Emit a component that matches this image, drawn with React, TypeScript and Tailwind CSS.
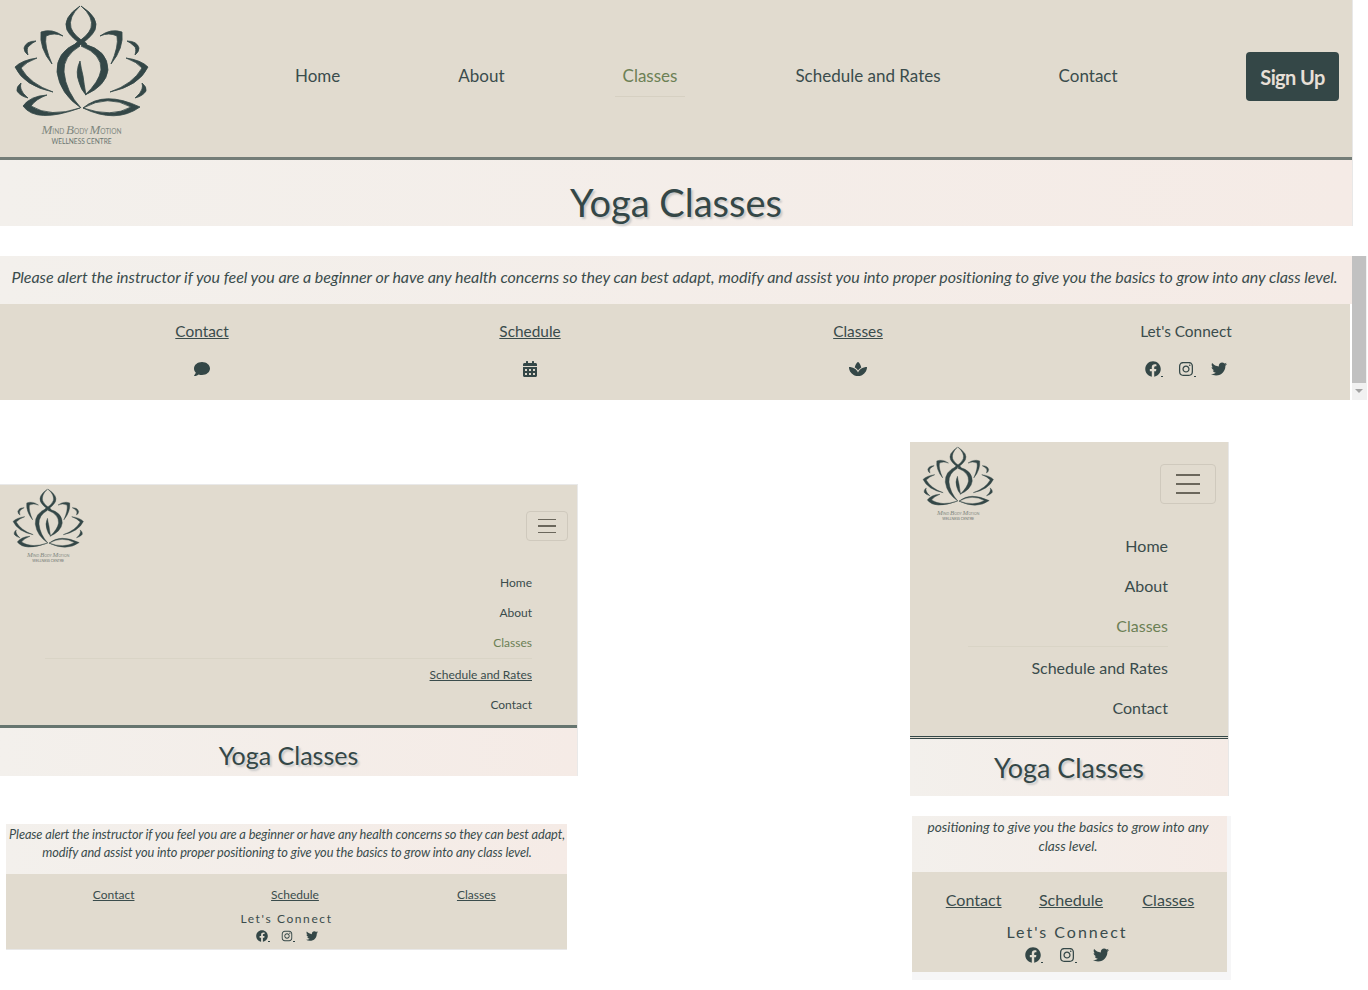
import React from "react";
import { FaComment, FaCalendarAlt, FaSpa, FaFacebook, FaInstagram, FaTwitter } from "react-icons/fa";

const font = "font-['Lato','Noto_Sans',sans-serif]";

function Petals() {
  return (
    <g fill="#344747" stroke="#344747" strokeWidth="0.8" strokeLinejoin="round">
      {/* crown petal */}
      <path d="M63 36 Q52 28 41 32 Q39 48 52 64 Q44 46 46 36 Q54 32 63 36Z" />
      {/* small upper petal */}
      <path d="M36 41 Q26 41 24 48 Q24 52 28 55 Q26 48 29 46 Q32 43 36 41Z" />
      {/* large side petal */}
      <path d="M37 58 Q22 60 15 67 Q24 86 53 92 Q30 84 21 68 Q26 62 37 58Z" />
      {/* small lower petal */}
      <path d="M21 83 Q16 87 17 91 Q20 96 28 98 Q22 93 21 89 Q20 86 21 83Z" />
    </g>
  );
}

function Logo({ className }: { className: string }) {
  return (
    <svg viewBox="0 0 164 155" className={className}>
      <g fill="#344747" stroke="#344747" strokeWidth="0.8" strokeLinejoin="round">
        {/* head */}
        <path d="M80 6 Q62 18 67 30 Q71 38 85 47 Q88 44 86 43 Q74 36 71 28 Q68 17 80 6Z" />
        <path d="M81 6 Q100 18 95 30 Q91 38 77 47 Q74 44 76 43 Q88 36 91 28 Q94 17 81 6Z" />
        {/* body */}
        <path d="M77 43 Q56 52 57 72 Q60 94 81 108 Q66 92 64 72 Q63 56 80 46Z" />
        <path d="M84 44 Q108 50 108 70 Q106 86 85 95 Q99 82 101 70 Q102 54 81 46Z" />
        <path d="M80 61 Q75 72 79 82 Q81 90 86 95 Q84 84 83 76 Q81 68 80 61Z" />
        {/* seat leaves */}
        <path d="M47 95 Q30 96 23 106 Q36 124 80 108 Q50 118 31 106 Q36 99 47 95Z" />
        <path d="M83 108 Q104 90 140 107 Q116 124 83 108 Q112 118 131 107 Q108 94 83 108Z" />
      </g>
      <Petals />
      <g transform="matrix(-1 0 0 1 163 0)">
        <Petals />
      </g>
      <text x="81.5" y="134" textAnchor="middle" fill="#80877f" fontSize="6.6" fontFamily="Lato, sans-serif">
        <tspan fontFamily="Liberation Serif, serif" fontStyle="italic" fontSize="13">M</tspan>IND{" "}
        <tspan fontFamily="Liberation Serif, serif" fontStyle="italic" fontSize="13">B</tspan>ODY{" "}
        <tspan fontFamily="Liberation Serif, serif" fontStyle="italic" fontSize="13">M</tspan>OTION
      </text>
      <text x="81.5" y="144" textAnchor="middle" fill="#6a7570" fontSize="6.6" fontFamily="Lato, sans-serif">
        WELLNESS CENTRE
      </text>
    </svg>
  );
}

function Burger({ box, line, gap }: { box: string; line: string; gap: string }) {
  return (
    <button className={`flex flex-col items-center justify-center rounded border border-[#cfc9bd] ${box} ${gap}`}>
      <span className={`block bg-[#6b675c] ${line}`} />
      <span className={`block bg-[#6b675c] ${line}`} />
      <span className={`block bg-[#6b675c] ${line}`} />
    </button>
  );
}

function Social({ size, gap }: { size: string; gap: string }) {
  return (
    <div className={`flex items-center justify-center text-[#344747] ${gap}`}>
      <span className="flex items-end">
        <FaFacebook className={size} />
        <span className="block h-px w-[2px] bg-[#344747]" />
      </span>
      <span className="flex items-end">
        <FaInstagram className={size} />
        <span className="block h-px w-[2px] bg-[#344747]" />
      </span>
      <FaTwitter className={size} />
    </div>
  );
}

const Gradient = "bg-gradient-to-r from-[#f3f0ec] to-[#f5ebe6]";
const Title = "text-[#344747] [text-shadow:2px_2px_2px_#c8c8c8]";

function DesktopView() {
  const items = ["Home", "About", "Classes", "Schedule and Rates", "Contact"];
  return (
    <div className="w-[1368px]">
      <div className="w-[1353px] border-r border-[#e8e8e8]">
        <header className="flex h-[160px] w-[1352px] items-center border-b-[3px] border-[#747d78] bg-[#e1dbcf] pb-[4px]">
          <Logo className="mt-[2px] h-[155px] w-[164px] shrink-0" />
          <nav className="ml-[131px] flex items-center gap-[118px] pb-[2px] text-[17px] text-[#3a4c4c]">
            {items.map((t) =>
              t === "Classes" ? (
                <span key={t} className="relative text-[#6c8055]">
                  {t}
                  <span className="absolute -bottom-[9px] -left-[8px] -right-[8px] h-px bg-[#d6d0c2]" />
                </span>
              ) : (
                <span key={t}>{t}</span>
              ),
            )}
          </nav>
          <button className="ml-auto mr-[13px] flex h-[49px] w-[93px] items-center justify-center rounded bg-[#344747] text-[20px] font-bold tracking-[-0.6px] text-[#e6dfd6]">
            Sign Up
          </button>
        </header>
        <div className={`flex h-[66px] items-center justify-center pt-[18px] ${Gradient}`}>
          <h1 className={`text-[38px] ${Title}`}>Yoga Classes</h1>
        </div>
      </div>
      <div className="mt-[30px] flex h-[144px]">
        <div className="w-[1352px]">
          <div className={`flex h-[48px] items-center justify-center pb-[6px] pr-[3px] ${Gradient}`}>
            <p className="whitespace-nowrap text-[16px] italic tracking-[-0.05px] text-[#3a4c4c]">
              Please alert the instructor if you feel you are a beginner or have any health concerns so they can best adapt, modify and assist you into proper positioning to give you the basics to grow into any class level.
            </p>
          </div>
          <div className="grid h-[96px] w-[1350px] grid-cols-4 bg-[#e1dbcf] pl-[38px] text-[15.4px] leading-6 text-[#3a4c4c]">
            {[
              ["Contact", <FaComment key="a" className="h-4 w-4" />],
              ["Schedule", <FaCalendarAlt key="b" className="h-4 w-[14px]" />],
              ["Classes", <FaSpa key="c" className="h-4 w-[18px]" />],
            ].map(([t, ic]) => (
              <div key={t as string} className="flex flex-col items-center pt-[15px]">
                <a className="underline">{t}</a>
                <div className="mt-[18px] flex h-4 items-center text-[#344747]">{ic}</div>
              </div>
            ))}
            <div className="flex flex-col items-center pt-[15px]">
              <span>Let's Connect</span>
              <div className="mt-[18px]">
                <Social size="h-4 w-4" gap="gap-[15px]" />
              </div>
            </div>
          </div>
        </div>
        <div className="flex w-[15px] flex-col bg-[#f1f1f1]">
          <div className="mr-px h-[127px] bg-[#c1c1c1]" />
          <div className="mt-auto flex h-[17px] items-center justify-center pb-[2px] pr-px">
            <span className="block h-0 w-0 border-x-[4px] border-t-[4px] border-x-transparent border-t-[#a3a3a3]" />
          </div>
        </div>
      </div>
    </div>
  );
}

function SmallView() {
  return (
    <div className="mt-[84px] w-[579px] shrink-0">
      <div className="w-[578px] border-r border-t border-[#e9e9e9]">
        <header className="border-b-[3px] border-[#66756f] bg-[#e1dbcf] pl-px">
          <div className="flex h-[79px] items-start justify-between pl-[4px] pr-[9px] pt-px">
            <Logo className="h-[82px] w-[87px]" />
            <div className="mt-[25px]">
              <Burger box="h-[30px] w-[42px]" line="h-[1.5px] w-[18px]" gap="gap-[5px]" />
            </div>
          </div>
          <nav className="ml-[44px] mr-[45px] pt-[4px] text-right text-[12px] text-[#3a4c4c]">
            <div className="flex h-[30px] items-center justify-end">Home</div>
            <div className="flex h-[30px] items-center justify-end">About</div>
            <div className="flex h-[31px] items-center justify-end border-b border-[#d9d4c6] pb-px text-[#6c8055]">Classes</div>
            <div className="flex h-[31px] items-center justify-end underline">Schedule and Rates</div>
            <div className="flex h-[30px] items-center justify-end">Contact</div>
          </nav>
          <div className="h-[5px]" />
        </header>
        <div className={`flex h-[48px] items-center justify-center pt-[8px] ${Gradient}`}>
          <h1 className={`text-[25px] ${Title}`}>Yoga Classes</h1>
        </div>
      </div>
      <div className="ml-[6px] mt-[48px] w-[561px]">
        <div className={`h-[50px] pl-px pt-px text-center text-[12.8px] leading-[18px] italic tracking-[-0.1px] text-[#3a4c4c] ${Gradient}`}>
          Please alert the instructor if you feel you are a beginner or have any health concerns so they can best adapt, modify and assist you into proper positioning to give you the basics to grow into any class level.
        </div>
        <div className="h-[76px] border-b border-[#e8e8e8] bg-[#e1dbcf] text-[12px] text-[#3a4c4c]">
          <div className="grid grid-cols-3 pl-[17px] pt-[12px] text-center">
            <a className="underline">Contact</a>
            <a className="underline">Schedule</a>
            <a className="underline">Classes</a>
          </div>
          <div className="mt-[6px] text-center leading-[18px] tracking-[1.6px]">Let's Connect</div>
          <div className="mt-[2px]">
            <Social size="h-3 w-3" gap="gap-[11px]" />
          </div>
        </div>
      </div>
    </div>
  );
}

function PhoneView() {
  return (
    <div className="ml-[331px] mt-[42px] w-[322px] shrink-0">
      <div className="w-[319px] border-r border-[#e8e8e8]">
        <header className="h-[297px] border-b-[3px] border-double border-[#344747] bg-[#e1dbcf]">
          <div className="flex h-[77px] items-start justify-between pl-[5px] pr-[12px] pt-[2px]">
            <Logo className="h-[82px] w-[87px]" />
            <div className="mt-[20px]">
              <Burger box="h-[40px] w-[56px]" line="h-[2px] w-[24px]" gap="gap-[7px]" />
            </div>
          </div>
          <nav className="ml-[58px] mr-[60px] pt-[7px] text-right text-[16px] text-[#3a4c4c]">
            <div className="flex h-[40px] items-center justify-end">Home</div>
            <div className="flex h-[40px] items-center justify-end">About</div>
            <div className="flex h-[41px] items-center justify-end border-b border-[#d9d4c6] text-[#6c8055]">Classes</div>
            <div className="flex h-[41px] items-center justify-end">Schedule and Rates</div>
            <div className="flex h-[40px] items-center justify-end">Contact</div>
          </nav>
        </header>
        <div className={`flex h-[57px] items-center justify-center pt-[2px] ${Gradient}`}>
          <h1 className={`text-[26.9px] ${Title}`}>Yoga Classes</h1>
        </div>
      </div>
      <div className="ml-[2px] mt-[20px] w-[319px] bg-[#f6f6f7] pb-[8px] pr-[4px]">
        <div className={`h-[56px] pr-[3px] pt-px text-center text-[13.7px] leading-[19px] italic text-[#3a4c4c] ${Gradient}`}>
          positioning to give you the basics to grow into any<br />class level.
        </div>
        <div className="h-[100px] bg-[#e1dbcf] text-[#3a4c4c]">
          <div className="grid grid-cols-3 pl-[13px] pr-[10px] pt-[16px] text-center text-[16.1px]">
            <a className="underline">Contact</a>
            <a className="underline">Schedule</a>
            <a className="underline">Classes</a>
          </div>
          <div className="mt-[9px] pr-[5px] text-center text-[16px] leading-[22px] tracking-[2px]">Let's Connect</div>
          <div className="mt-[4px] pr-[5px]">
            <Social size="h-4 w-4" gap="gap-[16px]" />
          </div>
        </div>
      </div>
    </div>
  );
}

export default function App() {
  return (
    <div className={`h-[990px] w-[1368px] overflow-hidden bg-white ${font}`}>
      <DesktopView />
      <div className="flex items-start">
        <SmallView />
        <PhoneView />
      </div>
    </div>
  );
}
